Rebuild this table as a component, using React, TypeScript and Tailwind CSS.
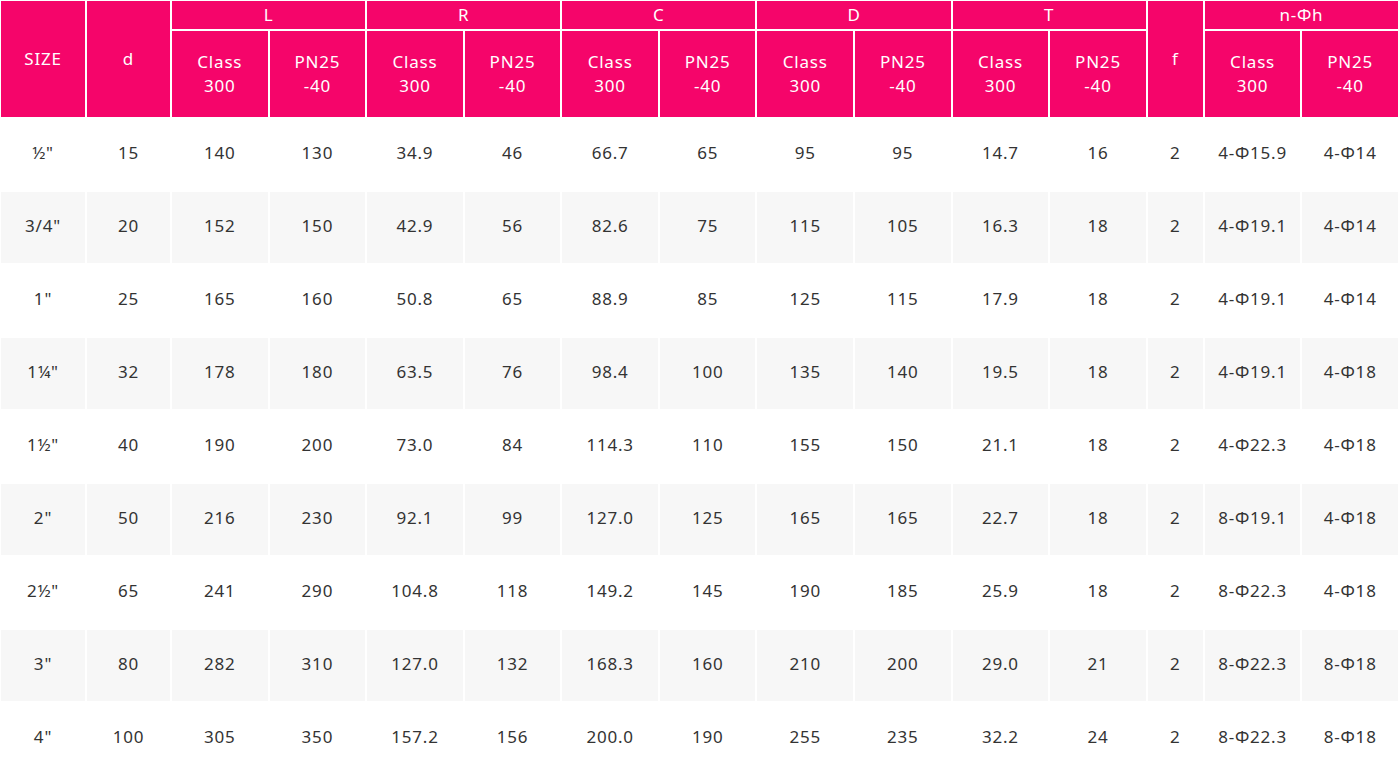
const rows: string[][] = [
  ["½\"", "15", "140", "130", "34.9", "46", "66.7", "65", "95", "95", "14.7", "16", "2", "4-Φ15.9", "4-Φ14"],
  ["3/4\"", "20", "152", "150", "42.9", "56", "82.6", "75", "115", "105", "16.3", "18", "2", "4-Φ19.1", "4-Φ14"],
  ["1\"", "25", "165", "160", "50.8", "65", "88.9", "85", "125", "115", "17.9", "18", "2", "4-Φ19.1", "4-Φ14"],
  ["1¼\"", "32", "178", "180", "63.5", "76", "98.4", "100", "135", "140", "19.5", "18", "2", "4-Φ19.1", "4-Φ18"],
  ["1½\"", "40", "190", "200", "73.0", "84", "114.3", "110", "155", "150", "21.1", "18", "2", "4-Φ22.3", "4-Φ18"],
  ["2\"", "50", "216", "230", "92.1", "99", "127.0", "125", "165", "165", "22.7", "18", "2", "8-Φ19.1", "4-Φ18"],
  ["2½\"", "65", "241", "290", "104.8", "118", "149.2", "145", "190", "185", "25.9", "18", "2", "8-Φ22.3", "4-Φ18"],
  ["3\"", "80", "282", "310", "127.0", "132", "168.3", "160", "210", "200", "29.0", "21", "2", "8-Φ22.3", "8-Φ18"],
  ["4\"", "100", "305", "350", "157.2", "156", "200.0", "190", "255", "235", "32.2", "24", "2", "8-Φ22.3", "8-Φ18"],
];

const groups = ["L", "R", "C", "D", "T"];

const SubHeads = () => (
  <>
    <th className="bg-[#f5056a] font-normal">Class<br />300</th>
    <th className="bg-[#f5056a] font-normal">PN25<br />-40</th>
  </>
);

export default function App() {
  return (
    <div className="w-[1400px] h-[774px] overflow-hidden bg-white" style={{ fontFamily: '"Noto Sans", "Open Sans", sans-serif' }}>
      <table className="w-[1401px] -ml-px -mt-px table-fixed border-separate border-spacing-[2px] text-center text-[17px] tracking-[0.8px]">
        <colgroup>
          <col className="w-[84px]" />
          <col className="w-[83px]" />
          {Array.from({ length: 10 }).map((_, i) => <col key={i} />)}
          <col className="w-[55px]" />
          <col />
          <col />
        </colgroup>
        <thead className="text-white leading-[24px]">
          <tr className="h-[28px]">
            <th rowSpan={2} className="bg-[#f5056a] font-normal">SIZE</th>
            <th rowSpan={2} className="bg-[#f5056a] font-normal">d</th>
            {groups.map((g) => (
              <th key={g} colSpan={2} className="bg-[#f5056a] font-normal">{g}</th>
            ))}
            <th rowSpan={2} className="bg-[#f5056a] font-normal">f</th>
            <th colSpan={2} className="bg-[#f5056a] font-normal">n-Φh</th>
          </tr>
          <tr className="h-[86px]">
            {groups.map((g) => <SubHeads key={g} />)}
            <SubHeads />
          </tr>
        </thead>
        <tbody className="text-[#333]">
          {rows.map((r, i) => (
            <tr key={i} className="h-[71px]">
              {r.map((c, j) => (
                <td key={j} className={`pb-[3px] ${i % 2 === 1 ? "bg-[#f7f7f7]" : "bg-white"}`}>{c}</td>
              ))}
            </tr>
          ))}
        </tbody>
      </table>
    </div>
  );
}
